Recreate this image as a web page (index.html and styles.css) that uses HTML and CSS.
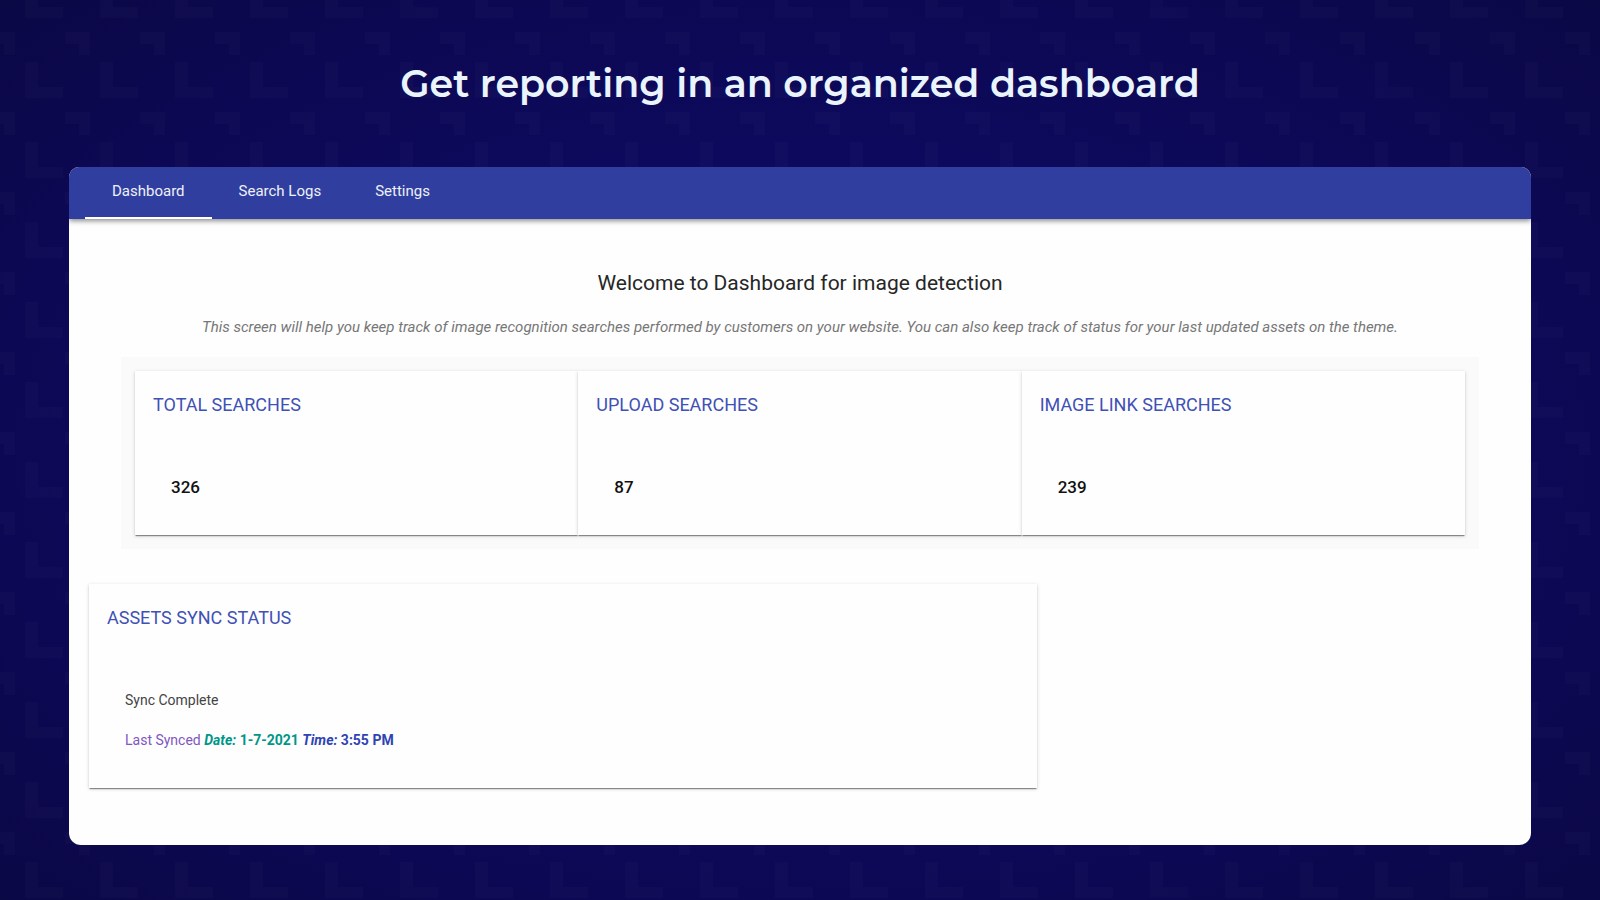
FILE: index.html
```html
<!DOCTYPE html>
<html lang="en">
<head>
<meta charset="utf-8">
<title>Image detection dashboard</title>
<link rel="stylesheet" href="styles.css">
</head>
<body>
<svg class="backdrop" aria-hidden="true">
  <defs>
    <pattern id="corners" x="20" y="30" width="75" height="80" patternUnits="userSpaceOnUse">
      <path d="M5 32h13v25h25v11H5z"/>
      <path d="M45 2h25v23H59V14H45z"/>
    </pattern>
  </defs>
  <rect width="100%" height="100%" fill="url(#corners)"/>
</svg>
<main class="page">
  <h1 class="headline">Get reporting in an organized dashboard</h1>
  <section class="app">
    <nav class="tabs">
      <button class="tab tab-active" type="button" aria-current="page">Dashboard</button>
      <button class="tab" type="button">Search Logs</button>
      <button class="tab" type="button">Settings</button>
    </nav>
    <div class="content">
      <header class="intro">
        <h2 class="welcome">Welcome to Dashboard for image detection</h2>
        <p class="summary">This screen will help you keep track of image recognition searches performed by customers on your website. You can also keep track of status for your last updated assets on the theme.</p>
      </header>
      <div class="stats">
        <article class="card">
          <h3 class="card-title">TOTAL SEARCHES</h3>
          <p class="count">326</p>
        </article>
        <article class="card">
          <h3 class="card-title">UPLOAD SEARCHES</h3>
          <p class="count">87</p>
        </article>
        <article class="card">
          <h3 class="card-title">IMAGE LINK SEARCHES</h3>
          <p class="count">239</p>
        </article>
      </div>
      <article class="card sync">
        <h3 class="card-title">ASSETS SYNC STATUS</h3>
        <div class="sync-body">
          <p>Sync Complete</p>
          <p class="synced">Last Synced <b class="date"><i>Date:</i> 1-7-2021</b> <b class="time"><i>Time:</i> 3:55 PM</b></p>
        </div>
      </article>
    </div>
  </section>
</main>
</body>
</html>
```
FILE: styles.css
```css
* {
  box-sizing: border-box;
}

body {
  margin: 0;
  min-height: 100vh;
  font-family: Roboto, "Liberation Sans", sans-serif;
  background: radial-gradient(ellipse at center, #0e0c66 0%, #0d0a5e 45%, #0c0852 75%, #0b0846 100%);
}

h1, h2, h3, p {
  margin: 0;
}

.backdrop {
  position: absolute;
  inset: 0;
  width: 100%;
  height: 100%;
  fill: #8c8cb4;
  opacity: 0.03;
}

.page {
  position: relative;
  padding: 60px 69px 54px;
}

.headline {
  margin-bottom: 59px;
  font-family: Montserrat, Inter, sans-serif;
  font-size: 38px;
  font-weight: 600;
  line-height: 48px;
  text-align: center;
  color: #eaf4fc;
}

.app {
  overflow: hidden;
  border-radius: 10px 10px 12px 12px;
  background: #fefefe;
}

.tabs {
  display: flex;
  height: 52px;
  padding-left: 16px;
  background: #303f9f;
  box-shadow: 0 2px 5px rgba(0, 0, 0, 0.45);
}

.tab {
  padding: 0 27px 2px;
  border: 0;
  border-bottom: 2px solid transparent;
  background: none;
  font-family: inherit;
  font-size: 15px;
  line-height: 24px;
  color: #eef0fa;
}

.tab-active {
  border-bottom-color: #fff;
}

.content {
  padding: 48px 20px 57px;
}

.intro {
  text-align: center;
}

.welcome {
  font-size: 21px;
  font-weight: 400;
  line-height: 32px;
  color: #262626;
}

.summary {
  margin: 16px 0 18px;
  font-size: 15px;
  font-style: italic;
  line-height: 24px;
  color: #777;
}

.stats {
  display: grid;
  grid-template-columns: repeat(3, 1fr);
  margin: 0 32px 35px;
  padding: 14px;
  background: #fafafa;
}

.card {
  padding: 19px 18px 36px;
  background: #fefefe;
  box-shadow: 0 2px 1px -1px rgba(0, 0, 0, 0.3), 0 1px 1px rgba(0, 0, 0, 0.14), 0 1px 4px rgba(0, 0, 0, 0.16);
}

.card-title {
  margin-bottom: 55px;
  font-size: 18px;
  font-weight: 400;
  line-height: 30px;
  color: #3f51b5;
}

.count {
  padding-left: 18px;
  font-size: 17px;
  font-weight: 500;
  line-height: 24px;
  color: #111;
}

.sync {
  width: 66.67%;
}

.sync-body {
  display: grid;
  gap: 16px;
  padding-left: 18px;
  font-size: 14px;
  line-height: 24px;
  color: #444;
}

.synced {
  color: #7e57c2;
}

.date {
  color: #009688;
}

.time {
  color: #3043b5;
}
```
